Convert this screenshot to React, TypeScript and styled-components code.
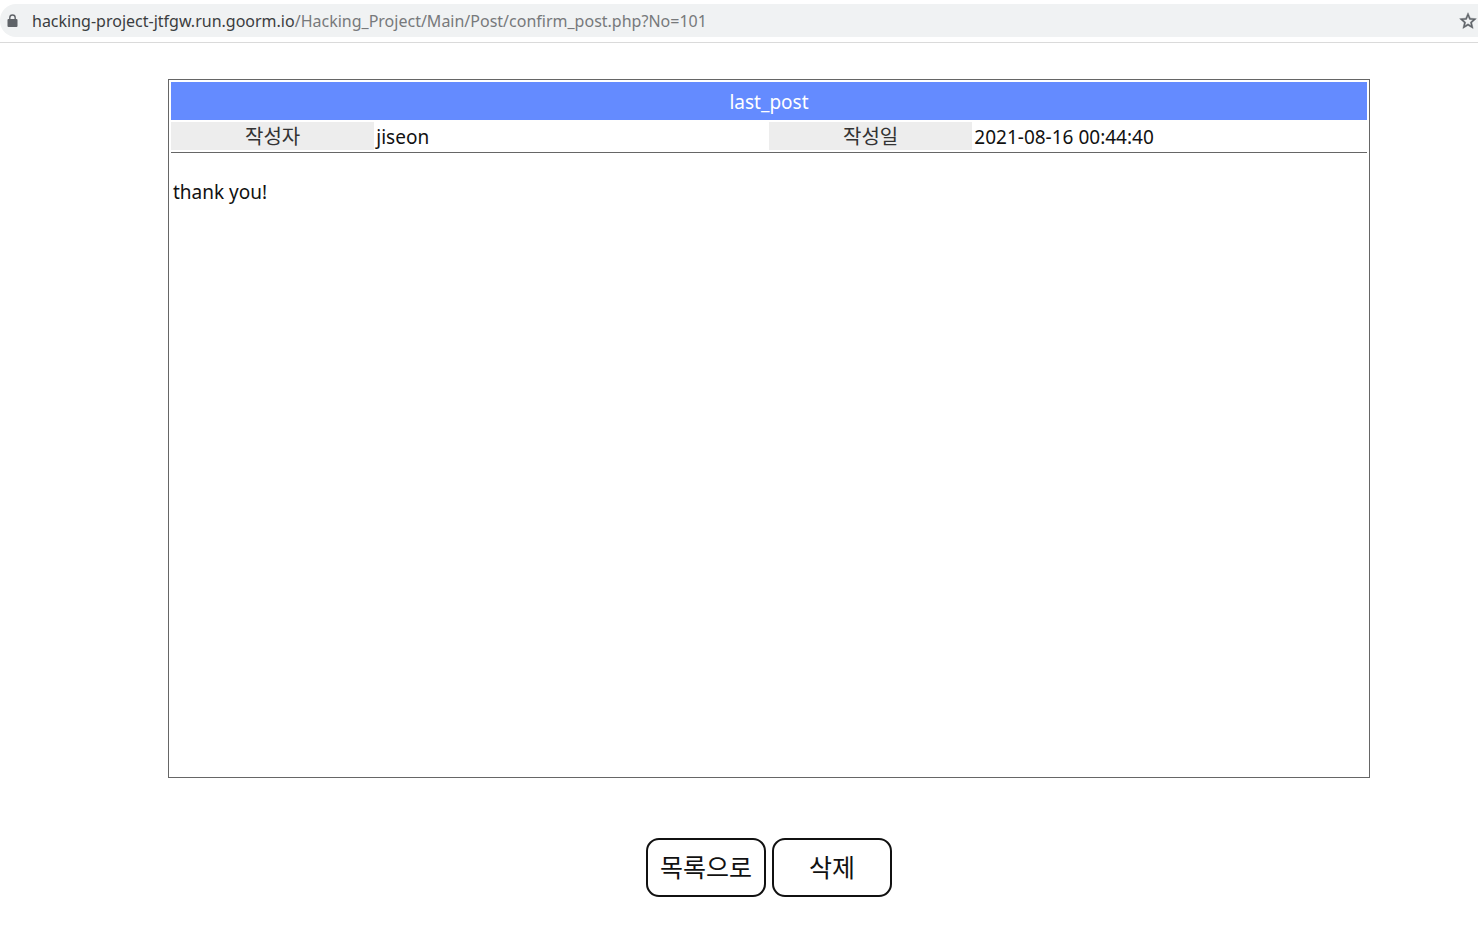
import React from "react";
import styled, { createGlobalStyle } from "styled-components";

const GlobalStyle = createGlobalStyle`
  * {
    box-sizing: border-box;
  }

  body {
    margin: 0;
    background: #fff;
    color: #111;
    font-family: "Noto Sans", "Noto Sans CJK KR", sans-serif;
    font-size: 19px;
    line-height: 28px;
  }
`;

const BrowserBar = styled.header`
  padding: 4px 0 5px;
  border-bottom: 1px solid #dadada;
`;

const AddressBar = styled.div`
  display: flex;
  align-items: center;
  height: 33px;
  padding-left: 6px;
  border-radius: 16px 0 0 16px;
  background: #f0f2f3;
`;

const LockIcon = styled.svg`
  flex: none;
  width: 13px;
  height: 16px;
  margin-right: 13px;
`;

const Address = styled.a`
  flex: 1;
  color: #77797b;
  font-size: 16px;
  line-height: 24px;
  text-decoration: none;
  white-space: nowrap;
`;

const Host = styled.span`
  color: #3b3d40;
`;

const StarButton = styled.button`
  display: flex;
  padding: 0;
  border: 0;
  background: none;
`;

const Page = styled.main`
  padding: 36px 108px 40px 168px;
`;

const PostTable = styled.table`
  width: 100%;
  padding: 0 2px;
  border: 1px solid #666;
  border-spacing: 0 2px;
  table-layout: fixed;
`;

const LabelColumn = styled.col`
  width: 17%;
`;

const ValueColumn = styled.col`
  width: 33%;
`;

const Title = styled.th`
  height: 38px;
  padding: 2px 0 0;
  background: #648bff;
  color: #fff;
  font-weight: 400;
`;

const Label = styled.th`
  height: 28px;
  padding: 2px 0 0;
  background: #ededed;
  color: #333;
  font-size: 20px;
  font-weight: 400;
  line-height: 26px;
`;

const Value = styled.td`
  padding: 2px 2px 0;
  line-height: 26px;
`;

const Content = styled.td`
  height: 623px;
  padding: 25px 2px;
  border-top: 1px solid #666;
  vertical-align: top;
`;

const Actions = styled.div`
  display: flex;
  justify-content: center;
  gap: 6px;
  margin-top: 60px;
`;

const ActionButton = styled.button`
  width: 120px;
  height: 59px;
  padding: 0 0 4px;
  border: 2px solid #111;
  border-radius: 13px;
  background: #fff;
  color: #111;
  font-family: "Noto Sans CJK KR", sans-serif;
  font-size: 25px;
`;

export default function App() {
  return (
    <>
      <GlobalStyle />
      <BrowserBar>
        <AddressBar>
          <LockIcon viewBox="0 0 13 16" aria-hidden="true">
            <path d="M3.8 7V4.7a2.7 2.7 0 0 1 5.4 0V7" fill="none" stroke="#5f6368" strokeWidth="1.4" />
            <rect x="1.5" y="6" width="10" height="8" rx="1" fill="#5f6368" />
          </LockIcon>
          <Address href="#">
            <Host>hacking-project-jtfgw.run.goorm.io</Host>
            /Hacking_Project/Main/Post/confirm_post.php?No=101
          </Address>
          <StarButton type="button" aria-label="Bookmark">
            <svg width="20" height="20" viewBox="0 0 24 24" aria-hidden="true">
              <path
                d="M22 9.24l-7.19-.62L12 2 9.19 8.63 2 9.24l5.46 4.73L5.82 21 12 17.27 18.18 21l-1.63-7.03L22 9.24zM12 15.4l-3.76 2.27 1-4.28-3.32-2.88 4.38-.38L12 6.1l1.71 4.04 4.38.38-3.32 2.88 1 4.28L12 15.4z"
                fill="#5f6368"
                stroke="#5f6368"
                strokeWidth="0.5"
              />
            </svg>
          </StarButton>
        </AddressBar>
      </BrowserBar>
      <Page>
        <PostTable>
          <colgroup>
            <LabelColumn />
            <ValueColumn />
            <LabelColumn />
            <ValueColumn />
          </colgroup>
          <thead>
            <tr>
              <Title colSpan={4}>last_post</Title>
            </tr>
          </thead>
          <tbody>
            <tr>
              <Label scope="row">작성자</Label>
              <Value>jiseon</Value>
              <Label scope="row">작성일</Label>
              <Value>2021-08-16 00:44:40</Value>
            </tr>
            <tr>
              <Content colSpan={4}>thank you!</Content>
            </tr>
          </tbody>
        </PostTable>
        <Actions>
          <ActionButton type="button">목록으로</ActionButton>
          <ActionButton type="button">삭제</ActionButton>
        </Actions>
      </Page>
    </>
  );
}
